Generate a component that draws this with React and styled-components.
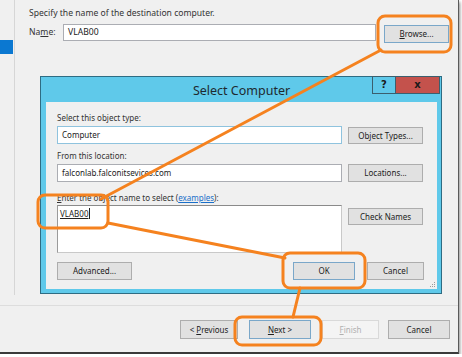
import React from 'react';
import styled, { createGlobalStyle } from 'styled-components';

const GlobalStyle = createGlobalStyle`
  * { box-sizing: border-box; }
  html, body {
    margin: 0;
    padding: 0;
    background: #ffffff;
    font-family: "Noto Sans", "Liberation Sans", sans-serif;
    color: #222;
  }
`;

const Window = styled.div`
  position: relative;
  width: 459px;
  height: 354px;
  background: #f0f0f0;
  border-right: 1px solid #5a5a5a;
  border-bottom: 2px solid #3a3a3a;
  box-shadow: 1px 2px 3px rgba(0, 0, 0, 0.45);
  display: flex;
  flex-direction: column;
  overflow: visible;
`;

const Upper = styled.div`
  display: flex;
  height: 305px;
`;

const Sidebar = styled.div`
  width: 15px;
  height: 295px;
  border-right: 1px solid #d6d6d6;
  padding-top: 40px;
`;

const SideItem = styled.div`
  width: 13px;
  height: 14px;
  background: #0b78d1;
`;

const Main = styled.div`
  flex: 1;
  padding: 8px 0 0 14px;
`;

const Intro = styled.div`
  font-size: 8.6px;
  line-height: 11px;
  color: #333;
`;

const NameRow = styled.div`
  display: flex;
  align-items: flex-start;
  margin-top: 5px;
`;

const NameLabel = styled.div`
  width: 34px;
  font-size: 8.6px;
  line-height: 17px;
  color: #333;
`;

const TextBox = styled.div`
  width: ${(p) => p.$w}px;
  height: ${(p) => p.$h || 18}px;
  background: #fff;
  border: 1px solid ${(p) => p.$border || '#abadb3'};
  font-size: ${(p) => p.$fs || 8}px;
  line-height: ${(p) => (p.$h || 18) - 2}px;
  padding-left: 4px;
  color: #222;
  white-space: nowrap;
`;

const Button = styled.div`
  width: ${(p) => p.$w}px;
  height: ${(p) => p.$h || 18}px;
  margin-top: ${(p) => p.$mt || 0}px;
  margin-left: ${(p) => p.$ml || 0}px;
  background: ${(p) => (p.$disabled ? '#f4f4f4' : '#e1e1e1')};
  border: 1px solid ${(p) => (p.$disabled ? '#d9d9d9' : p.$focus ? '#7aa7c9' : '#adadad')};
  color: ${(p) => (p.$disabled ? '#b0b0b0' : '#222')};
  font-size: ${(p) => p.$fs || 8}px;
  line-height: ${(p) => (p.$h || 18) - 2}px;
  text-align: center;
  white-space: nowrap;
  flex-shrink: 0;
`;

const Dialog = styled.div`
  margin: 33px 0 0 11px;
  width: 402px;
  height: 218px;
  background: #5fc9ea;
  border: 1px solid #2e6c83;
  padding: 0 4px 4px 5px;
  display: flex;
  flex-direction: column;
`;

const TitleBar = styled.div`
  height: 25px;
  display: grid;
  grid-template-columns: 1fr auto 1fr;
  align-items: start;
`;

const Title = styled.div`
  grid-column: 2;
  font-size: 12.5px;
  line-height: 25px;
  color: #1e2a30;
  padding-top: 1px;
`;

const TitleButtons = styled.div`
  grid-column: 3;
  justify-self: end;
  display: flex;
  margin-top: -1px;
  margin-right: -3px;
`;

const CaptionButton = styled.div`
  width: ${(p) => p.$w}px;
  height: 18px;
  background: ${(p) => p.$bg};
  border: 1px solid #3b5f6e;
  border-left-width: ${(p) => (p.$first ? 1 : 0)}px;
  font-size: 10px;
  font-weight: bold;
  line-height: 16px;
  text-align: center;
  color: #1a1a1a;
  font-family: "DejaVu Sans", sans-serif;
`;

const Client = styled.div`
  flex: 1;
  background: #f0f0f0;
  padding: 10px 13px 0 11px;
  position: relative;
`;

const Label = styled.div`
  height: 12px;
  margin-top: ${(p) => p.$mt || 0}px;
  font-size: 8px;
  line-height: 12px;
  color: #333;
  white-space: nowrap;
`;

const FieldRow = styled.div`
  display: flex;
  align-items: flex-start;
  gap: 6px;
  margin-top: ${(p) => p.$mt || 2}px;
`;

const NameArea = styled.div`
  width: 285px;
  height: 48px;
  background: #fff;
  border: 1px solid #c9c9c9;
  border-top-color: #8a8a8a;
  border-left-color: #9a9a9a;
  padding: 2px 0 0 2px;
  font-size: 8px;
  line-height: 12px;
`;

const Resolved = styled.span`
  text-decoration: underline;
  border-right: 1px solid #222;
  padding-right: 1px;
`;

const Link = styled.span`
  color: #1a6fc9;
  text-decoration: underline;
`;

const ButtonRow = styled.div`
  display: flex;
  align-items: flex-start;
  margin-top: 9px;
`;

const Spacer = styled.div`
  flex: 1;
`;

const Grip = styled.svg`
  position: absolute;
  right: 1px;
  bottom: 1px;
`;

const Footer = styled.div`
  flex: 1;
  border-top: 1px solid #dddddd;
  display: flex;
  justify-content: flex-end;
  align-items: flex-start;
  padding: 14px 8px 0 0;
`;

const Overlay = styled.svg`
  position: absolute;
  left: 0;
  top: 0;
  pointer-events: none;
  overflow: visible;
`;

const ORANGE = '#f5821f';

export default function App() {
  return (
    <>
      <GlobalStyle />
      <Window>
        <Upper>
          <Sidebar>
            <SideItem />
          </Sidebar>
          <Main>
            <Intro>Specify the name of the destination computer.</Intro>
            <NameRow>
              <NameLabel>Na<u>m</u>e:</NameLabel>
              <TextBox $w={313} $h={17} $fs={8.6}>VLAB00</TextBox>
              <Button $w={65} $mt={1} $ml={8} $focus>
                <u>B</u>rowse...
              </Button>
            </NameRow>

            <Dialog>
              <TitleBar>
                <Title>Select Computer</Title>
                <TitleButtons>
                  <CaptionButton $w={24} $bg="#5fc9ea" $first>?</CaptionButton>
                  <CaptionButton $w={44} $bg="#c4524c">x</CaptionButton>
                </TitleButtons>
              </TitleBar>
              <Client>
                <Label>Select this object type:</Label>
                <FieldRow>
                  <TextBox $w={285} $border="#8fc3de">Computer</TextBox>
                  <Button $w={75} $h={17} $mt={1}>Object Types...</Button>
                </FieldRow>
                <Label $mt={6}>From this location:</Label>
                <FieldRow>
                  <TextBox $w={285}>falconlab.falconitsevices.com</TextBox>
                  <Button $w={75} $h={18}>Locations...</Button>
                </FieldRow>
                <Label $mt={10}>
                  <u>E</u>nter the object name to select (<Link>examples</Link>):
                </Label>
                <FieldRow $mt={1}>
                  <NameArea>
                    <Resolved>VLAB00</Resolved>
                  </NameArea>
                  <Button $w={75} $h={17} $mt={3}>Check Names</Button>
                </FieldRow>
                <ButtonRow>
                  <Button $w={75}>Advanced...</Button>
                  <Spacer />
                  <Button $w={62} $focus>OK</Button>
                  <Button $w={57} $ml={12}>Cancel</Button>
                </ButtonRow>
                <Grip width="6" height="6" viewBox="0 0 6 6">
                  <rect x="4" y="0" width="1" height="1" fill="#9a9a9a" />
                  <rect x="2" y="2" width="1" height="1" fill="#9a9a9a" />
                  <rect x="4" y="2" width="1" height="1" fill="#9a9a9a" />
                  <rect x="0" y="4" width="1" height="1" fill="#9a9a9a" />
                  <rect x="2" y="4" width="1" height="1" fill="#9a9a9a" />
                  <rect x="4" y="4" width="1" height="1" fill="#9a9a9a" />
                </Grip>
              </Client>
            </Dialog>
          </Main>
        </Upper>
        <Footer>
          <Button $w={58} $h={19}>
            &lt; <u>P</u>revious
          </Button>
          <Button $w={62} $h={19} $ml={11} $focus>
            <u>N</u>ext &gt;
          </Button>
          <Button $w={57} $h={19} $ml={11} $disabled>
            <u>F</u>inish
          </Button>
          <Button $w={62} $h={19} $ml={9}>
            Cancel
          </Button>
        </Footer>

        <Overlay width="462" height="357" viewBox="0 0 462 357">
          <g fill="none" stroke={ORANGE} strokeWidth="3" strokeLinecap="round" strokeLinejoin="round">
            <rect x="378" y="16" width="73" height="36" rx="7" />
            <line x1="381" y1="50" x2="101" y2="199" />
            <rect x="38" y="195" width="70" height="33" rx="7" />
            <line x1="108" y1="223" x2="285" y2="258" />
            <rect x="283" y="253" width="82" height="35" rx="7" />
            <line x1="300" y1="288" x2="293" y2="317" />
            <rect x="235" y="317" width="86" height="28" rx="7" />
          </g>
        </Overlay>
      </Window>
    </>
  );
}
